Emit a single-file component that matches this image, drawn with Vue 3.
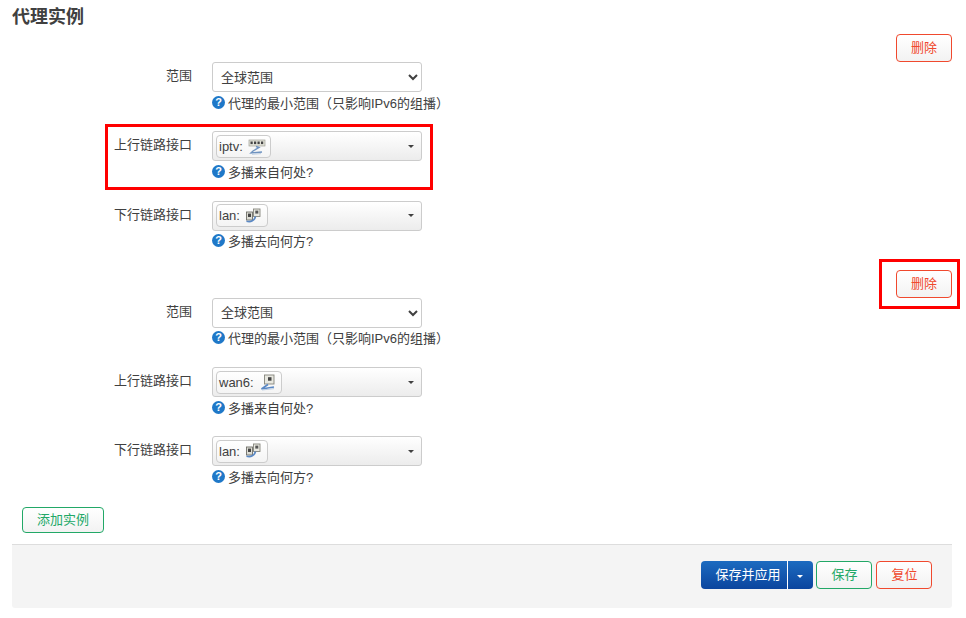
<script setup>
const sections = [
  { id: 1, up: { name: 'iptv:', icon: 'switch' }, down: { name: 'lan:', icon: 'lan' } },
  { id: 2, up: { name: 'wan6:', icon: 'wan' }, down: { name: 'lan:', icon: 'lan' } }
]
</script>

<template>
  <div class="page">
    <h3 class="title">代理实例</h3>

    <section v-for="s in sections" :key="s.id" class="instance">
      <div class="remove-row">
        <button class="btn btn-red btn-remove" type="button">删除</button>
      </div>

      <div class="row">
        <label class="label">范围</label>
        <div class="control">
          <select class="native">
            <option>全球范围</option>
          </select>
          <div class="help">
            <span class="q">?</span><span>代理的最小范围（只影响IPv6的组播）</span>
          </div>
        </div>
      </div>

      <div class="row" v-for="(r, i) in [{ l: '上行链路接口', v: s.up, h: '多播来自何处?' }, { l: '下行链路接口', v: s.down, h: '多播去向何方?' }]" :key="i">
        <label class="label">{{ r.l }}</label>
        <div class="control">
          <div class="drop">
            <span class="chip">
              <span class="chip-name">{{ r.v.name }}</span>
              <svg v-if="r.v.icon === 'switch'" class="ico" viewBox="0 0 18 18">
                <rect x="1" y="3" width="16" height="6" fill="#e2e2d8" stroke="#a0a097" stroke-width="0.7" />
                <rect x="2.5" y="4.5" width="2.2" height="2.6" fill="#444" />
                <rect x="6" y="4.5" width="2.2" height="2.6" fill="#444" />
                <rect x="9.5" y="4.5" width="2.2" height="2.6" fill="#444" />
                <rect x="13" y="4.5" width="2.2" height="2.6" fill="#444" />
                <path d="M8 9.5 L11 10.5 L5 14 L3 16 L14 15" fill="none" stroke="#6f93c0" stroke-width="1.4" />
                <path d="M4 17.3 L13 16.6" fill="none" stroke="#bccde2" stroke-width="1" />
              </svg>
              <svg v-else-if="r.v.icon === 'lan'" class="ico" viewBox="0 0 18 18">
                <rect x="8.5" y="2" width="6.5" height="7.5" fill="#e8e8e0" stroke="#85857c" stroke-width="0.9" />
                <rect x="10.3" y="3.6" width="3" height="3" fill="#555" />
                <rect x="1.5" y="5" width="6" height="8" fill="#dcdcd4" stroke="#6f6f68" stroke-width="0.9" />
                <rect x="3" y="6.6" width="3" height="3.4" fill="#444" />
                <path d="M1.5 14.2 C6 15.5 9.5 13.5 10.5 9.5" fill="none" stroke="#5a88c4" stroke-width="1.7" />
              </svg>
              <svg v-else class="ico" viewBox="0 0 18 18">
                <rect x="5.5" y="2" width="9.5" height="9" fill="#e8e8e0" stroke="#85857c" stroke-width="0.9" />
                <rect x="9" y="4.2" width="3.5" height="3.5" fill="#444" />
                <path d="M9 11.5 L6 13.5 L2.5 16 L15 14" fill="none" stroke="#5a88c4" stroke-width="1.6" />
                <path d="M3 17 L15 15.6" fill="none" stroke="#bccde2" stroke-width="1" />
              </svg>
            </span>
            <span class="caret"></span>
          </div>
          <div class="help">
            <span class="q">?</span><span>{{ r.h }}</span>
          </div>
        </div>
      </div>
    </section>

    <div class="add-row">
      <button class="btn btn-green btn-add" type="button">添加实例</button>
    </div>

    <footer class="footer">
      <div class="split">
        <button class="split-main" type="button">保存并应用</button>
        <button class="split-arrow" type="button"><span class="caret caret-white"></span></button>
      </div>
      <button class="btn btn-green btn-foot" type="button">保存</button>
      <button class="btn btn-red btn-foot" type="button">复位</button>
    </footer>

    <div class="mark mark-row"></div>
    <div class="mark mark-btn"></div>
  </div>
</template>

<style scoped>
.page {
  position: relative;
  width: 966px;
  height: 618px;
  box-sizing: border-box;
  padding: 0 14px 0 12px;
  background: #fff;
  color: #404040;
  font-family: "Liberation Sans", "Noto Sans CJK SC", sans-serif;
  font-size: 13px;
  overflow: hidden;
}
.title {
  margin: 0;
  height: 34px;
  line-height: 34px;
  font-size: 18px;
  font-weight: 700;
  color: #404040;
}
.remove-row {
  display: flex;
  justify-content: flex-end;
}
.btn {
  box-sizing: border-box;
  height: 28px;
  padding: 0 0 3px;
  border-radius: 4px;
  border: 1px solid;
  background: linear-gradient(#fff, #f2f2f2);
  font: inherit;
}
.btn-red {
  border-color: #f0492e;
  color: #f0492e;
}
.btn-green {
  border-color: #22a867;
  color: #22a867;
}
.btn-remove {
  width: 56px;
}
.row {
  display: flex;
  height: 69.25px;
}
.label {
  width: 180px;
  height: 30px;
  line-height: 28px;
  text-align: right;
  flex: none;
}
.control {
  margin-left: 20px;
  width: 210px;
}
.native {
  display: block;
  box-sizing: border-box;
  width: 210px;
  height: 30px;
  padding: 0 4px;
  border: 1px solid #ccc;
  border-radius: 3px;
  background-color: #fff;
  color: #404040;
  font: inherit;
}
.drop {
  box-sizing: border-box;
  height: 30px;
  display: flex;
  align-items: center;
  justify-content: space-between;
  padding: 0 7px 0 3px;
  border: 1px solid #ccc;
  border-radius: 3px;
  background: linear-gradient(#fff, #ececec);
}
.chip {
  box-sizing: border-box;
  height: 23px;
  display: inline-flex;
  align-items: center;
  padding: 0 4px 0 2px;
  border: 1px solid #ccc;
  border-radius: 4px;
  background: linear-gradient(#fff, #f4f4f4);
}
.ico {
  width: 18px;
  height: 18px;
  margin-left: 5px;
}
.caret {
  width: 0;
  height: 0;
  border-left: 3px solid transparent;
  border-right: 3px solid transparent;
  border-top: 3px solid #404040;
}
.caret-white {
  display: inline-block;
  border-top-color: #fff;
  vertical-align: middle;
}
.help {
  display: flex;
  align-items: center;
  height: 20px;
  white-space: nowrap;
}
.q {
  flex: none;
  width: 13px;
  height: 13px;
  margin-right: 3px;
  border-radius: 50%;
  background: #1f78c8;
  color: #fff;
  font-size: 11px;
  font-weight: 700;
  line-height: 13px;
  text-align: center;
}
.add-row {
  margin: 1.5px 0 0 10px;
}
.btn-add {
  width: 82px;
  height: 26px;
}
.footer {
  box-sizing: border-box;
  height: 64px;
  margin-top: 11px;
  padding: 16px 20px 0 0;
  display: flex;
  justify-content: flex-end;
  align-items: flex-start;
  gap: 4px;
  border-top: 1px solid #ddd;
  border-radius: 0 0 3px 3px;
  background: #f4f4f4;
}
.split {
  display: flex;
  height: 28px;
  margin-right: -1px;
  border-radius: 4px;
  overflow: hidden;
  background: linear-gradient(#1c6bc0, #0b459e);
}
.split-main,
.split-arrow {
  height: 28px;
  padding: 0;
  border: 0;
  background: none;
  color: #fff;
  font: inherit;
}
.split-main {
  width: 87px;
  border-right: 1px solid #fff;
  box-sizing: border-box;
  padding: 0 0 3px 8px;
}
.split-arrow {
  width: 25px;
  padding-right: 2px;
}
.btn-foot {
  width: 56px;
  padding-left: 1px;
}
.mark {
  position: absolute;
  box-sizing: border-box;
  border: 3px solid #f00;
}
.mark-row {
  left: 105px;
  top: 124px;
  width: 328px;
  height: 66px;
}
.mark-btn {
  left: 879px;
  top: 259px;
  width: 81px;
  height: 50px;
}
</style>
